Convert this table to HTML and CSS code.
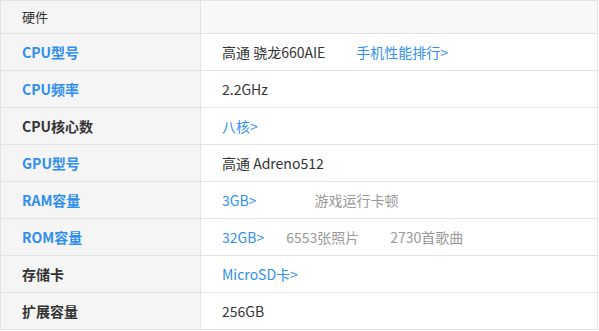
FILE: index.html
```html
<!DOCTYPE html>
<html>
<head>
<meta charset="utf-8">
<link rel="stylesheet" href="styles.css">
</head>
<body>
<table class="spec">
  <tr class="head"><td class="label">硬件</td><td class="value"></td></tr>
  <tr><td class="label link">CPU型号</td><td class="value">高通 骁龙660AIE<a class="extra extra-rank">手机性能排行&gt;</a></td></tr>
  <tr><td class="label link">CPU频率</td><td class="value">2.2GHz</td></tr>
  <tr><td class="label">CPU核心数</td><td class="value"><a class="vlink">八核&gt;</a></td></tr>
  <tr><td class="label link">GPU型号</td><td class="value">高通 Adreno512</td></tr>
  <tr><td class="label link">RAM容量</td><td class="value"><a class="vlink">3GB&gt;</a><span class="note note-ram">游戏运行卡顿</span></td></tr>
  <tr><td class="label link">ROM容量</td><td class="value"><a class="vlink">32GB&gt;</a><span class="note note-photo">6553张照片</span><span class="note note-song">2730首歌曲</span></td></tr>
  <tr><td class="label">存储卡</td><td class="value"><a class="vlink">MicroSD卡&gt;</a></td></tr>
  <tr><td class="label">扩展容量</td><td class="value">256GB</td></tr>
</table>
</body>
</html>
```
FILE: styles.css
```css
html, body {
  margin: 0;
  padding: 0;
  background: #fff;
}
body {
  font-family: "Noto Sans CJK SC", "Noto Sans", sans-serif;
  font-size: 14px;
  color: #333;
}
.spec {
  border-collapse: collapse;
  width: 598px;
  table-layout: fixed;
}
.spec td {
  border: 1px solid #e3e3e3;
  height: 36px;
  padding: 0 0 0 21px;
  vertical-align: middle;
  line-height: 20px;
  white-space: nowrap;
}
.spec .label {
  width: 178px;
  background: #f5f5f5;
  font-weight: bold;
  color: #333;
}
.spec .label.link {
  color: #2f8ff0;
}
.spec .head td {
  height: 32px;
  background: #f8f8f8;
}
.spec .head .label {
  font-weight: normal;
  font-size: 13px;
  background: #f5f5f5;
}
.value {
  color: #333;
}
.vlink, .extra {
  color: #2f8ff0;
  text-decoration: none;
}
.extra-rank {
  margin-left: 31px;
}
.note {
  color: #999;
}
.note-ram {
  margin-left: 58px;
}
.note-photo {
  margin-left: 22px;
}
.note-song {
  margin-left: 31px;
}
```
